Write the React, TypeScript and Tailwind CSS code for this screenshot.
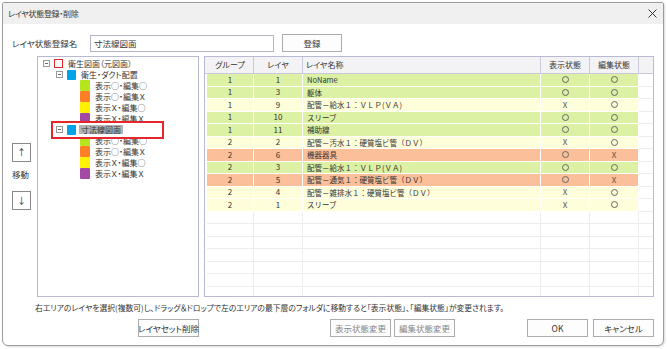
import React from 'react';

type Row = { g: number; l: number; name: string; d: string; e: string; c: 'g' | 'y' | 's' };

const rows: Row[] = [
  { g: 1, l: 1, name: 'NoName', d: '○', e: '○', c: 'g' },
  { g: 1, l: 3, name: '躯体', d: '○', e: '○', c: 'g' },
  { g: 1, l: 9, name: '配管－給水１：ＶＬＰ(ＶＡ)', d: 'X', e: '○', c: 'y' },
  { g: 1, l: 10, name: 'スリーブ', d: '○', e: '○', c: 'g' },
  { g: 1, l: 11, name: '補助線', d: '○', e: '○', c: 'g' },
  { g: 2, l: 2, name: '配管－汚水１：硬質塩ビ管（ＤＶ）', d: 'X', e: '○', c: 'y' },
  { g: 2, l: 6, name: '機器器具', d: '○', e: 'X', c: 's' },
  { g: 2, l: 3, name: '配管－給水１：ＶＬＰ(ＶＡ)', d: '○', e: '○', c: 'g' },
  { g: 2, l: 5, name: '配管－通気１：硬質塩ビ管（ＤＶ）', d: '○', e: 'X', c: 's' },
  { g: 2, l: 4, name: '配管－雑排水１：硬質塩ビ管（ＤＶ）', d: 'X', e: '○', c: 'y' },
  { g: 2, l: 1, name: 'スリーブ', d: 'X', e: '○', c: 'y' },
];

const rowBg: Record<Row['c'], string> = {
  g: 'bg-[#dcf1a4]',
  y: 'bg-[#fefedb]',
  s: 'bg-[#fbbf99]',
};

const leaves = [
  { color: 'bg-[#b5e61d]', label: '表示○・編集○' },
  { color: 'bg-[#ff7f27]', label: '表示○・編集Ｘ' },
  { color: 'bg-[#fff200]', label: '表示Ｘ・編集○' },
  { color: 'bg-[#a349a4]', label: '表示Ｘ・編集Ｘ' },
];

function Expander() {
  return (
    <div className="w-[7px] h-[7px] border border-[#9a9a9a] flex items-center justify-center shrink-0">
      <div className="w-[3px] h-px bg-[#6a6a6a]" />
    </div>
  );
}

function Leaf({ color, label }: { color: string; label: string }) {
  return (
    <div className="flex items-center h-[11px] pl-[42px]">
      <div className={`w-[10px] h-[11px] rounded-[1px] ${color}`} />
      <span className="ml-[5px] leading-none">{label}</span>
    </div>
  );
}

function Mark({ v }: { v: string }) {
  if (v === '○') return <div className="w-[7px] h-[7px] rounded-full border border-[#666]" />;
  return <span className="text-[#555]">X</span>;
}

function Btn({ label, w = 'w-[61px]', disabled = false }: { label: string; w?: string; disabled?: boolean }) {
  return (
    <div
      className={`${w} h-[18px] border border-[#acacac] bg-[#fdfdfd] flex items-center justify-center text-[8.5px] whitespace-nowrap ${
        disabled ? 'text-[#858585]' : 'text-[#333]'
      }`}
    >
      {label}
    </div>
  );
}

export default function App() {
  const cols = 'grid grid-cols-[2px_47px_49px_238px_49px_49px_14px]';
  return (
    <div className="w-[667px] h-[349px] bg-white pt-[2px] pl-[2px] font-['Noto_Sans_CJK_JP',sans-serif] [font-feature-settings:'palt'] text-[#333]">
      <div className="w-[662px] h-[344px] border border-[#9c9c9c] rounded-b-[6px] rounded-t-[2px] overflow-hidden bg-white shadow-[1px_1px_2px_rgba(0,0,0,0.15)]">
        {/* title bar */}
        <div className="h-[21px] bg-[#f0f0f0] flex items-center justify-between pl-[5px] pr-[6px]">
          <span className="text-[8px] tracking-[-0.3px] leading-none">レイヤ状態登録・削除</span>
          <svg width="9" height="9" viewBox="0 0 9 9">
            <path d="M0.5 0.5 L8.5 8.5 M8.5 0.5 L0.5 8.5" stroke="#333" strokeWidth="1" />
          </svg>
        </div>

        {/* name row */}
        <div className="flex items-center pt-[10px] pl-[9px] text-[8.5px]">
          <span className="w-[78px] leading-none">レイヤ状態登録名</span>
          <div className="w-[184px] h-[17px] border border-[#b4b4cc] flex items-center pl-[3px] leading-none">寸法線図面</div>
          <div className="ml-[8px]">
            <Btn label="登録" w="w-[60px]" />
          </div>
        </div>

        {/* main area */}
        <div className="flex mt-[4px] h-[241px]">
          <div className="w-[34px] pl-[9px] pt-[87px] flex flex-col items-start">
            <div className="w-[19px] h-[19px] border border-[#8a8a8a] bg-white flex items-center justify-center text-[9px] leading-none">↑</div>
            <div className="mt-[8px] text-[8.5px] leading-none">移動</div>
            <div className="mt-[12px] w-[19px] h-[19px] border border-[#8a8a8a] bg-white flex items-center justify-center text-[9px] leading-none">↓</div>
          </div>

          {/* tree */}
          <div className="w-[162px] border border-[#b9b9d3] pt-[1px] text-[8px] overflow-hidden">
            <div className="flex items-center h-[11px] pl-[5px]">
              <Expander />
              <div className="ml-[4px] w-[9px] h-[9px] border border-[#e5262b] bg-white" />
              <span className="ml-[5px] leading-none">衛生図面（元図面）</span>
            </div>
            <div className="flex items-center h-[11px] pl-[18px]">
              <Expander />
              <div className="ml-[4px] w-[9px] h-[10px] rounded-[1px] bg-[#00a2e8]" />
              <span className="ml-[5px] leading-none">衛生・ダクト配置</span>
            </div>
            {leaves.map((lf) => (
              <Leaf key={lf.label} {...lf} />
            ))}
            <div className="relative h-[11px]">
              <div className="absolute left-[13px] top-[-3px] w-[113px] h-[18px] border-2 border-[#e5262b] bg-white z-10" />
              <div className="relative z-20 flex items-center h-[11px] pl-[18px]">
                <Expander />
                <div className="ml-[4px] w-[9px] h-[10px] rounded-[1px] bg-[#00a2e8]" />
                <span className="ml-[3px] px-[2px] h-[9px] flex items-center bg-[#b4b4b4] leading-none">寸法線図面</span>
              </div>
            </div>
            {leaves.map((lf) => (
              <Leaf key={'b' + lf.label} {...lf} />
            ))}
          </div>

          {/* table */}
          <div className="ml-[5px] w-[450px] border border-[#b9b9d3] overflow-hidden text-[8px]">
            <div className={`${cols} h-[17px] bg-[#f3f3f5] border-b border-[#c9c9dc]`}>
              <div />
              <div className="flex items-center justify-center border-r border-[#c9c9d9]">グループ</div>
              <div className="flex items-center justify-center border-r border-[#c9c9d9]">レイヤ</div>
              <div className="flex items-center pl-[3px] border-r border-[#c9c9d9]">レイヤ名称</div>
              <div className="flex items-center justify-center border-r border-[#c9c9d9]">表示状態</div>
              <div className="flex items-center justify-center border-r border-[#c9c9d9]">編集状態</div>
              <div />
            </div>
            {rows.map((r, i) => (
              <div key={i} className={`${cols} h-[12.5px] leading-none`}>
                <div />
                <div className={`${rowBg[r.c]} border-r border-b border-white flex items-center justify-center`}>{r.g}</div>
                <div className={`${rowBg[r.c]} border-r border-b border-white flex items-center justify-center`}>{r.l}</div>
                <div className={`${rowBg[r.c]} border-r border-b border-white flex items-center pl-[4px] whitespace-nowrap text-[7.5px] [font-feature-settings:normal]`}>{r.name}</div>
                <div className={`${rowBg[r.c]} border-r border-b border-white flex items-center justify-center`}>
                  <Mark v={r.d} />
                </div>
                <div className={`${rowBg[r.c]} border-r border-b border-white flex items-center justify-center`}>
                  <Mark v={r.e} />
                </div>
                <div className="border-b border-[#ececec]" />
              </div>
            ))}
            {Array.from({ length: 7 }).map((_, i) => (
              <div key={'e' + i} className={`${cols} h-[12.5px]`}>
                <div />
                <div className="border-r border-b border-[#ececec]" />
                <div className="border-r border-b border-[#ececec]" />
                <div className="border-r border-b border-[#ececec]" />
                <div className="border-r border-b border-[#ececec]" />
                <div className="border-r border-b border-[#ececec]" />
                <div className="border-b border-[#ececec]" />
              </div>
            ))}
          </div>
        </div>

        {/* footer */}
        <div className="mt-[5px] pl-[32px] h-[11px] flex items-center text-[7.8px] leading-none whitespace-nowrap">
          右エリアのレイヤを選択(複数可)し、ドラッグ＆ドロップで左のエリアの最下層のフォルダに移動すると「表示状態」、「編集状態」が変更されます。
        </div>
        <div className="mt-[6px] flex pl-[135px]">
          <Btn label="レイヤセット削除" />
          <div className="ml-[131px]">
            <Btn label="表示状態変更" disabled />
          </div>
          <div className="ml-[3px]">
            <Btn label="編集状態変更" disabled />
          </div>
          <div className="ml-[72px]">
            <Btn label="OK" />
          </div>
          <div className="ml-[5px]">
            <Btn label="キャンセル" />
          </div>
        </div>
      </div>
    </div>
  );
}
